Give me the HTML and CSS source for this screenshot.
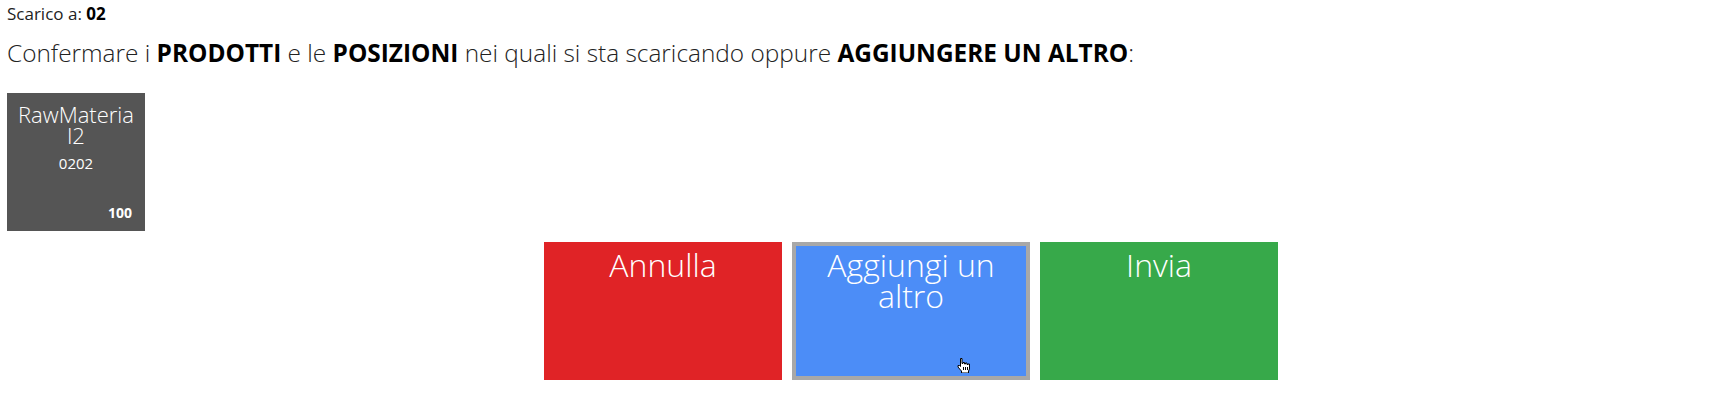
FILE: index.html
```html
<!DOCTYPE html>
<html lang="it">
<head>
<meta charset="utf-8">
<title>Scarico</title>
<link rel="stylesheet" href="styles.css">
</head>
<body>
<div class="page">
  <div class="info">Scarico a: <b>02</b></div>
  <h1 class="prompt">Confermare i <b>PRODOTTI</b> e le <b>POSIZIONI</b> nei quali si sta scaricando oppure <b>AGGIUNGERE UN ALTRO</b>:</h1>
  <div class="tiles">
    <div class="tile">
      <div class="tile-name">RawMaterial2</div>
      <div class="tile-code">0202</div>
      <div class="tile-qty">100</div>
    </div>
  </div>
  <div class="actions">
    <div class="btn btn-red">Annulla</div>
    <div class="btn btn-blue btn-active">Aggiungi un altro
      <svg class="cursor" width="13" height="15" viewBox="0 0 13 15" aria-hidden="true">
        <path d="M3.5 0.5 h1.5 v5 h1 v-1 h1.5 v1.5 h1 v-1 h1.5 v1.5 h1 v-0.5 h1.5 v5 l-1 2 v2 h-7 v-2 l-1 -1 l-2.5 -3 v-1.5 h1.5 l1 1 z" fill="#fff" stroke="#000" stroke-width="1" stroke-linejoin="miter"/>
        <path d="M6.5 9 v3 M8.5 9 v3 M10.5 9 v3" stroke="#000" stroke-width="1"/>
      </svg>
    </div>
    <div class="btn btn-green">Invia</div>
  </div>
</div>
</body>
</html>
```

FILE: styles.css
```css
html, body {
  margin: 0;
  padding: 0;
  background: #ffffff;
}

body {
  font-family: "Open Sans", "Liberation Sans", sans-serif;
  color: #333333;
}

.page {
  padding: 0 7px;
}

.info {
  font-size: 17px;
  font-weight: 400;
  line-height: 22px;
  padding-top: 3px;
  color: #222;
}

.info b {
  font-weight: 700;
  color: #000;
}

.prompt {
  margin: 11px 0 0 0;
  font-size: 24.4px;
  font-weight: 300;
  line-height: 33px;
  color: #222;
}

.prompt b {
  font-weight: 700;
  color: #000;
}

.tiles {
  display: flex;
  margin-top: 24px;
}

.tile {
  position: relative;
  width: 138px;
  height: 138px;
  box-sizing: border-box;
  background: #555555;
  color: #ffffff;
  text-align: center;
  padding: 11px 9.5px 0;
}

.tile-name {
  font-size: 22px;
  font-weight: 300;
  line-height: 21px;
  word-break: break-all;
}

.tile-code {
  margin-top: 7px;
  font-size: 15px;
  font-weight: 400;
  line-height: 20px;
}

.tile-qty {
  position: absolute;
  right: 13px;
  bottom: 10px;
  font-size: 14px;
  font-weight: 700;
  line-height: 16px;
}

.actions {
  display: flex;
  gap: 10px;
  margin-top: 11px;
  padding-left: 537px;
}

.btn {
  position: relative;
  width: 238px;
  height: 138px;
  box-sizing: border-box;
  border: 4px solid transparent;
  padding: 3px 6px 0;
  color: #ffffff;
  font-size: 32px;
  font-weight: 300;
  line-height: 31px;
  text-align: center;
}

.btn-red {
  background: #e02326;
}

.btn-blue {
  background: #4c8df7;
  background-clip: padding-box;
}

.btn-green {
  background: #37a94a;
}

.btn-active {
  border-color: #a8a8a8;
}

.cursor {
  position: absolute;
  left: 161px;
  top: 112px;
}
```
